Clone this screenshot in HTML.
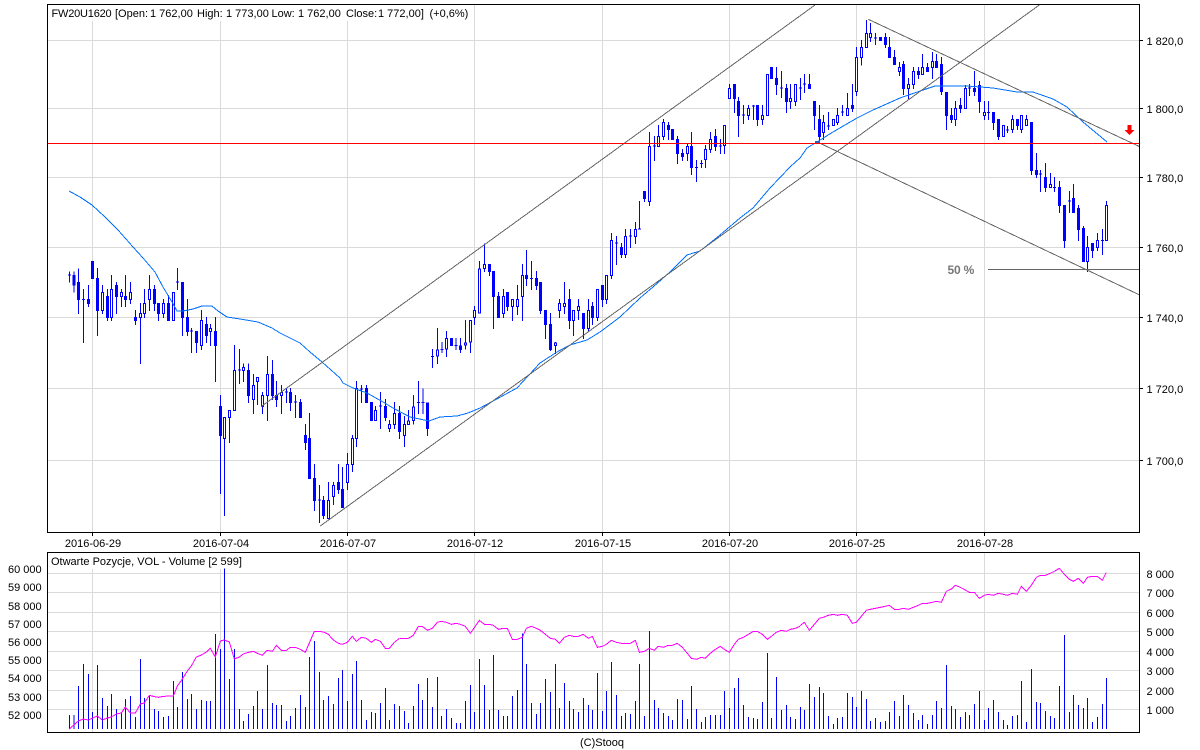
<!DOCTYPE html>
<html>
<head>
<meta charset="utf-8">
<title>FW20U1620</title>
<style>
html,body{margin:0;padding:0;background:#fff;width:1200px;height:750px;overflow:hidden}
svg{display:block}
text{font-family:"Liberation Sans",Arial,sans-serif;font-size:11px;fill:#000;white-space:pre}
.c{shape-rendering:crispEdges;fill:none}
.w{stroke:#00f;stroke-width:3}
.b{stroke:#00f;stroke-width:9}
.h{stroke:#fff;stroke-width:3}
.g{shape-rendering:crispEdges;fill:none;stroke:#dadada;stroke-width:1}
.t{fill:none;stroke:#666;stroke-width:1;shape-rendering:crispEdges}
.m{fill:none;stroke:#0070ff;stroke-width:1;shape-rendering:crispEdges}
.p{fill:none;stroke:#f0f;stroke-width:3;shape-rendering:crispEdges}
</style>
</head>
<body>
<svg width="1200" height="750" viewBox="0 0 1200 750" xmlns="http://www.w3.org/2000/svg">
<rect width="1200" height="750" fill="#fff"/>

<!-- grid main -->
<path class="g" d="M48 40.5H1139M48 108.5H1139M48 177.5H1139M48 247.5H1139M48 317.5H1139M48 388.5H1139M48 460.5H1139M92.5 21V532M220.5 21V532M347.5 21V532M474.5 5V532M602.5 5V532M729.5 5V532M856.5 5V532M984.5 5V532"/>
<!-- grid lower -->
<path class="g" d="M48 573.5H1139M48 592.5H1139M48 612.5H1139M48 631.5H1139M48 651.5H1139M48 670.5H1139M48 690.5H1139M48 709.5H1139M92.5 569V732M220.5 569V732M347.5 553V732M474.5 553V732M602.5 553V732M729.5 553V732M856.5 553V732M984.5 553V732"/>

<!-- candles zoom1 -->
<g transform="translate(.17 230) scale(.33333)">
<path class="c w" d="M208 124V158M222 124V188M235 115V252M250 177V339M265 165V231M292 114V318M307 165V252M322 177V273M334 135V273M349 156V252M364 177V231M376 135V231M391 156V222M406 240V285M421 219V402M433 177V264M448 135V243M463 165V243M475 219V273M490 207V264M505 195V273M520 186V273M532 114V180M547 156V318M562 207V318M574 294V369M589 303V369M604 240V360M619 261V339M631 282V348M646 261V456M661 495V792M673 561V858M688 540V639M703 345V543M718 357V462M730 400V456M745 400V519M760 432V552M772 441V525M787 486V552M802 378V573M817 390V510M829 453V531M844 465V552M859 474V519M871 474V543M886 495V564M901 507V564M916 582V660M928 549V747M943 702V843M958 765V879M970 798V867M985 756V867M1000 756V825M1015 702V792M1027 711V834M1042 669V780M1057 615V726M1069 453V651M1084 465V519M1099 465V519M1114 516V573M1126 528V573M1141 486V597M1156 507V573M1168 570V606M1183 516V597"/>
<path class="c b" d="M222 135V167M235 156V210M265 207V222M277 93V147M292 144V243M322 198V264M349 165V201M376 198V210M406 261V273M463 177V222M475 219V252M505 219V273M547 156V264M562 261V306M589 303V339M619 282V318M646 303V348M661 528V618M745 420V498M817 432V498M829 495V510M871 486V519M901 516V564M916 615V639M928 624V747M943 744V813M970 810V858M1015 756V780M1027 777V834M1099 474V519M1114 516V573M1156 528V564
M307 186V243M334 177V264M364 186V201M391 186V210M421 249V264M433 219V252M448 177V210M490 219V252M520 186V273M604 270V348M631 294V306M673 561V627M688 540V564M703 420V543M730 411V423M760 465V510M772 441V456M787 495V531M802 432V498M844 486V498M985 810V867M1000 765V801M1042 702V759M1057 624V705M1069 474V627M1126 540V573M1168 582V597M1183 549V585
M208 134V137M250 207V210M532 155V158M574 302V305M718 419V422M859 485V488M886 515V518M958 809V812M1084 476V479M1141 527V530"/>
<path class="c h" d="M307 189V240M334 180V261M364 189V198M391 189V207M421 252V261M433 222V249M448 180V207M490 222V249M520 189V270M604 273V345M631 297V303M673 564V624M688 543V561M703 423V540M730 414V420M760 468V507M772 444V453M787 498V528M802 435V495M844 489V495M985 813V864M1000 768V798M1042 705V756M1057 627V702M1069 477V624M1126 543V570M1168 585V594M1183 552V582"/>
</g>

<!-- candles zoom8 -->
<g transform="translate(340.17 310) scale(.33333)">
<path class="c w" d="M178 288V387M193 318V411M205 300V345M220 255V343M235 213V312M248 235V312M262 277V378M277 117V174M292 54V162M305 96V129M319 63V141M334 84V108M348 84V120M361 84V129M376 30V118M391 30V129"/>
<path class="c b" d="M178 309V366M262 277V357M334 84V108M361 106V120M193 342V378M205 331V345M220 289V333M292 118V140M319 84V118M376 97V106M391 30V97M235 276V279M248 276V279M277 138V141M305 117V120M348 105V108"/>
<path class="c h" d="M193 345V375M205 334V342M220 292V330M292 121V137M319 87V115M376 100V103M391 33V94"/>
</g>

<!-- candles zoom2 -->
<g transform="translate(400.17 100) scale(.33333)">
<path class="c w" d="M223 618V675M238 483V640M253 430V516M268 492V528M280 513V687M295 576V654M310 567V654M322 576V633M337 597V663M352 555V645M367 492V663M379 450V558M394 483V570M409 513V570M421 546V642M436 630V717M451 639V753M466 726V762M478 597V654M493 546V642M508 567V687M520 630V708M535 597V660M550 639V717M565 597V696M577 606V675M592 567V663M607 555V621M619 525V612M634 399V537M649 408V495M664 429V474M676 387V474M691 387V444M706 366V432M718 303V387M733 273V306M748 96V318M763 108V183M775 75V141M790 57V120M805 66V120M832 108V192M847 147V183M862 129V183M874 96V225M889 180V246M904 180V204M916 135V204M931 96V159M946 87V153M961 117V162M973 75V162"/>
<path class="c b" d="M268 492V516M280 513V591M295 588V654M322 576V621M379 525V537M409 534V558M421 546V633M436 630V675M451 672V750M508 597V663M550 639V687M577 618V654M607 555V600M664 441V465M733 273V297M805 75V90M817 87V120M832 117V162M847 159V171M874 138V204M946 108V141
M223 630V654M238 505V640M253 492V507M310 588V642M337 597V621M352 597V621M367 525V591M466 727V738M478 609V633M493 609V621M520 630V663M535 618V633M565 630V687M592 567V654M619 525V600M634 420V528M676 408V465M706 387V411M748 138V306M775 108V141M790 66V111M862 138V162M916 147V180M931 117V150M973 75V138
M394 534V537M649 428V431M691 407V410M718 386V389M763 137V140M889 201V204M904 189V192M961 137V140"/>
<path class="c h" d="M223 633V651M238 508V637M253 495V504M310 591V639M337 600V618M352 600V618M367 528V588M466 730V735M478 612V630M493 612V618M520 633V660M535 621V630M565 633V684M592 570V651M619 528V597M634 423V525M676 411V462M706 390V408M748 141V303M775 111V138M790 69V108M862 141V159M916 150V177M931 120V147M973 78V135"/>
</g>

<!-- candles zoom9 -->
<g transform="translate(700.17 50) scale(.33333)">
<path class="c w" d="M88 102V147M103 102V189M115 141V261M130 165V222M145 165V210M160 165V210M172 165V228M187 165V225M229 51V135M244 63V144M259 102V189M271 102V177M286 102V168M301 84V150M313 72V129M328 72V117"/>
<path class="c b" d="M103 102V147M115 153V198M172 165V210M214 51V87M229 84V105M259 114V156M328 102V117
M88 114V147M145 174V198M187 195V210M202 72V198M271 144V156M286 102V156
M130 194V197M160 167V170M244 113V116M301 113V116M313 101V104"/>
<path class="c h" d="M88 117V144M145 177V195M187 198V207M202 75V195M271 147V153M286 105V153"/>
</g>

<!-- candles zoom3 -->
<g transform="translate(800.17 0) scale(.33333)">
<path class="c w" d="M43 303V390M58 315V420M70 345V420M85 336V390M112 324V375M127 315V348M142 279V348M157 252V336M169 141V288M184 120V196M199 60V144M211 69V126M226 99V135M256 99V144M268 111V174M283 150V195M298 186V228M310 183V285M325 234V297M340 201V267M355 201V237M367 162V225M382 189V216M397 156V237M409 162V204M424 171V285M439 276V390M454 324V369M466 303V378M481 294V339M496 255V327M508 252V288M523 213V288M538 243V339M553 303V360M565 303V360M580 336V390M595 357V420M622 378V399M637 345V399M652 357V390M664 345V399M679 345V378M694 366V525M709 459V534M721 510V576M736 489V576M751 519V564M763 531V576M778 543V639M793 615V744M808 573V639M820 552V639M835 615V723M850 678V786M862 708V816M877 729V774M892 699V753M907 687V765M919 603V723"/>
<path class="c b" d="M43 303V348M58 357V411M157 315V327M241 111V123M256 111V135M268 141V174M283 171V195M310 192V267M355 213V225M382 201V216M409 183V204M424 192V276M439 276V348M454 345V360M481 315V327M523 264V276M538 255V306M580 336V369M595 357V411M652 357V378M694 366V513M709 510V525M736 531V564M778 561V618M793 615V723M820 594V639M835 624V690M850 684V786M877 729V753
M70 366V399M100 357V378M112 345V369M142 324V348M169 171V276M184 141V174M199 99V144M211 99V114M298 201V216M325 252V267M340 213V255M367 201V225M397 183V204M466 324V360M496 264V327M553 336V348M610 375V411M637 357V390M664 345V390M679 357V378M751 552V564M862 741V786M892 720V744M919 615V723
M85 377V380M127 335V338M226 113V116M508 263V266M565 336V339M622 389V392M721 521V524M763 561V564M808 602V605M907 720V723"/>
<path class="c h" d="M70 369V396M100 360V375M112 348V366M142 327V345M169 174V273M184 144V171M199 102V141M211 102V111M298 204V213M325 255V264M340 216V252M367 204V222M397 186V201M466 327V357M496 267V324M553 339V345M610 378V408M637 360V387M664 348V387M679 360V375M751 555V561M862 744V783M892 723V741M919 618V720"/>
</g>

<!-- moving average -->
<polyline class="m" points="69,191 80,197 92,205 105,217 118,230 133,247 143,258 155,272 163,287 172,302 177,311 183,311 193,309 202,306 212,306 218,311 227,317 240,319 258,322 272,328 280,333 300,343 310,352 322,362 340,378 343,383 353,388 367,393 383,402 393,408 410,417 429,421 440,417 457,416 468,413 480,408 495,400 517,388 540,363 557,352 570,345 587,340 600,332 620,317 640,298 653,287 670,272 687,255 700,251 720,235 740,218 753,208 770,188 790,167 800,158 807,148 817,142 833,132 857,118 873,110 900,98 923,90 935,86 967,86 993,88 1017,92 1033,92 1053,99 1067,107 1083,122 1107,142"/>

<!-- trend lines -->
<path class="t" d="M261 406.7L815 5M320.3 526L1039.3 5M868.3 19.3L1139.7 146.7M816.7 141.7L1139.7 295"/>
<path class="c" stroke="#666" stroke-width="1" d="M988 269.5H1139"/>
<rect x="815" y="141" width="5" height="2" fill="#2a5fc0"/>
<path class="c" stroke="#f00" stroke-width="1" d="M48 143.5H1139"/>
<polygon points="1127.5,125 1131.5,125 1131.5,130 1134.5,130 1129.5,135 1124.5,130 1127.5,130" fill="#f00"/>
<text x="947.5" y="274" style="font-size:12px;font-weight:bold;fill:#777;letter-spacing:-.2px">50 %</text>

<!-- label backgrounds and frames -->
<rect x="48" y="5" width="423" height="16" fill="#fff"/>
<rect x="48" y="553" width="197" height="16" fill="#fff"/>
<text y="17"><tspan x="51.5" style="letter-spacing:-.2px">FW20U1620</tspan><tspan x="115">[Open:</tspan><tspan x="150">1 762,00</tspan><tspan x="197">High:</tspan><tspan x="226">1 773,00</tspan><tspan x="271.5">Low:</tspan><tspan x="298">1 762,00</tspan><tspan x="346">Close:</tspan><tspan x="378">1 772,00]</tspan><tspan x="429.5">(+0,6%)</tspan></text>
<path class="c" stroke="#000" stroke-width="1" d="M47.5 4.5H1139.5V532.5H47.5ZM47.5 552.5H1139.5V732.5H47.5ZM1140 40.5h3M1140 108.5h3M1140 177.5h3M1140 247.5h3M1140 317.5h3M1140 388.5h3M1140 460.5h3M92.5 533v3M220.5 533v3M347.5 533v3M474.5 533v3M602.5 533v3M729.5 533v3M856.5 533v3M984.5 533v3"/>

<!-- volume -->
<g transform="translate(.17 540) scale(.33333)">
<path class="c w" d="M208 567V525M222 567V525M235 567V438M250 567V372M265 567V402M277 567V516M292 567V375M307 567V474M322 567V498M334 567V462M349 567V507M364 567V519M376 567V477M391 567V468M406 567V531M421 567V357M433 567V474M448 567V468M463 567V507M475 567V513M490 567V531M505 567V528M520 567V423M532 567V501M547 567V396M562 567V477M574 567V462M589 567V507M604 567V480M619 567V483M631 567V483M646 567V282M661 567V327M673 567V85M688 567V417M703 567V327M718 567V507M730 567V543M745 567V522M760 567V498M772 567V453M787 567V507M802 567V375M817 567V489M829 567V495M844 567V495M859 567V543M871 567V528M886 567V504M901 567V465M916 567V501M928 567V351M943 567V303M958 567V396M970 567V480M985 567V468M1000 567V492M1015 567V414M1027 567V390M1042 567V483M1057 567V402M1069 567V363M1084 567V480M1099 567V540M1114 567V516M1126 567V519M1141 567V489M1156 567V444M1168 567V540M1183 567V492M1198 567V498"/>
</g>
<g transform="translate(400.17 540) scale(.33333)">
<path class="c w" d="M13 567V513M25 567V549M40 567V498M55 567V432M67 567V480M82 567V414M97 567V501M112 567V411M124 567V528M139 567V507M154 567V534M169 567V549M181 567V549M196 567V483M211 567V435M223 567V516M238 567V357M253 567V435M268 567V510M280 567V345M295 567V510M310 567V528M322 567V528M337 567V468M352 567V450M367 567V280M379 567V372M394 567V489M409 567V522M421 567V489M436 567V417M451 567V456M466 567V372M478 567V504M493 567V429M508 567V483M520 567V507M535 567V516M550 567V474M565 567V495M577 567V510M592 567V399M607 567V513M619 567V453M634 567V366M649 567V465M664 567V528M676 567V519M691 567V522M706 567V483M718 567V372M733 567V528M748 567V273M763 567V480M775 567V504M790 567V519M805 567V528M817 567V540M832 567V477M847 567V480M862 567V537M874 567V438M889 567V507M904 567V546M916 567V531M931 567V525M946 567V525M961 567V525M973 567V453M988 567V504M1003 567V444M1015 567V414M1030 567V495M1045 567V531M1060 567V534M1072 567V537M1087 567V486M1102 567V339M1114 567V534M1129 567V411M1144 567V510M1159 567V495M1171 567V531M1186 567V537"/>
</g>
<g transform="translate(800.17 540) scale(.33333)">
<path class="c w" d="M1 567V501M13 567V510M28 567V432M43 567V471M58 567V441M70 567V459M85 567V528M100 567V552M112 567V534M127 567V531M142 567V459M157 567V471M169 567V501M184 567V453M199 567V477M211 567V543M226 567V534M241 567V546M256 567V543M268 567V516M283 567V483M298 567V528M310 567V465M325 567V495M340 567V519M355 567V540M367 567V525M382 567V552M397 567V525M409 567V483M424 567V504M439 567V375M454 567V498M466 567V507M481 567V531M496 567V516M508 567V525M523 567V492M538 567V453M553 567V540M565 567V504M580 567V480M595 567V516M610 567V540M622 567V555M637 567V528M652 567V525M664 567V423M679 567V546M694 567V387M709 567V486M721 567V489M736 567V513M751 567V528M763 567V534M778 567V438M793 567V285M808 567V516M820 567V465M835 567V495M850 567V504M862 567V474M877 567V546M892 567V531M907 567V492M919 567V414"/>
</g>

<!-- open interest magenta -->
<g transform="translate(0 540) scale(.33333)">
<polyline class="p" points="208,567 235,543 250,537 265,540 292,528 307,540 322,534 334,531 349,522 364,519 376,501 391,519 406,519 421,492 433,489 448,466 463,470 475,472 490,469 520,468 532,438 547,417 562,393 574,378 589,351 604,345 619,336 631,325 646,351 661,303 673,300 688,306 703,357 718,351 730,342 745,337 760,334 772,340 787,346 802,331 817,334 829,316 844,331 859,331 871,322 886,322 901,328 916,337 943,274 958,274 973,277 985,283 1000,300 1015,310 1027,313 1042,307 1057,289 1069,304 1084,292 1099,295 1114,307 1126,298 1141,304 1156,325 1168,325 1183,307 1198,295"/>
</g>
<g transform="translate(400 540) scale(.33333)">
<polyline class="p" points="0,295 25,295 40,286 55,259 67,259 82,271 97,265 112,247 124,244 139,247 154,253 169,250 181,253 196,259 211,280 238,241 253,253 268,253 280,256 295,268 310,265 322,265 337,298 352,298 367,292 379,265 394,259 409,265 421,271 436,283 451,295 466,298 478,310 493,292 508,286 520,289 535,289 550,283 565,295 577,289 592,322 607,319 619,313 634,301 649,307 664,310 691,310 706,301 718,337 733,334 748,325 763,331 775,319 790,322 805,316 817,316 832,310 847,322 862,340 874,355 889,358 904,352 916,355 931,340 946,328 961,319 973,328 988,337 1003,313 1015,298 1030,292 1045,283 1060,274 1072,274 1087,283 1102,298 1114,289 1129,277 1144,271 1159,274 1171,268 1186,265 1200,259"/>
</g>
<g transform="translate(800 540) scale(.33333)">
<polyline class="p" points="0,257 13,247 28,271 43,253 58,235 70,232 85,226 100,223 112,226 127,223 142,226 157,250 169,247 184,229 199,211 211,208 226,205 241,202 256,199 268,196 283,208 298,208 310,205 325,208 340,202 355,196 367,190 382,190 397,187 409,184 424,187 439,154 454,147 466,136 481,142 496,150 508,157 523,157 538,175 553,166 565,163 580,166 595,160 610,163 622,166 637,160 652,163 664,139 679,154 694,136 709,112 721,106 736,106 751,100 763,94 778,85 793,103 808,118 820,124 835,115 850,130 862,112 877,109 892,109 907,121 919,97"/>
</g>

<text x="51" y="565">Otwarte Pozycje, VOL - Volume [2 599]</text>

<!-- price axis -->
<text x="1146.5" y="45">1 820,0</text>
<text x="1146.5" y="113">1 800,0</text>
<text x="1146.5" y="182">1 780,0</text>
<text x="1146.5" y="252">1 760,0</text>
<text x="1146.5" y="322">1 740,0</text>
<text x="1146.5" y="393">1 720,0</text>
<text x="1146.5" y="465">1 700,0</text>

<!-- dates -->
<text x="93" y="547" text-anchor="middle">2016-06-29</text>
<text x="221" y="547" text-anchor="middle">2016-07-04</text>
<text x="348" y="547" text-anchor="middle">2016-07-07</text>
<text x="475" y="547" text-anchor="middle">2016-07-12</text>
<text x="603" y="547" text-anchor="middle">2016-07-15</text>
<text x="730" y="547" text-anchor="middle">2016-07-20</text>
<text x="857" y="547" text-anchor="middle">2016-07-25</text>
<text x="985" y="547" text-anchor="middle">2016-07-28</text>

<!-- lower left axis -->
<text x="8" y="573">60 000</text>
<text x="8" y="591">59 000</text>
<text x="8" y="610">58 000</text>
<text x="8" y="628">57 000</text>
<text x="8" y="646">56 000</text>
<text x="8" y="664">55 000</text>
<text x="8" y="682">54 000</text>
<text x="8" y="701">53 000</text>
<text x="8" y="719">52 000</text>

<!-- lower right axis -->
<text x="1146.5" y="578">8 000</text>
<text x="1146.5" y="597">7 000</text>
<text x="1146.5" y="617">6 000</text>
<text x="1146.5" y="636">5 000</text>
<text x="1146.5" y="656">4 000</text>
<text x="1146.5" y="675">3 000</text>
<text x="1146.5" y="695">2 000</text>
<text x="1146.5" y="714">1 000</text>

<text x="580" y="746">(C)Stooq</text>
</svg>
</body>
</html>
